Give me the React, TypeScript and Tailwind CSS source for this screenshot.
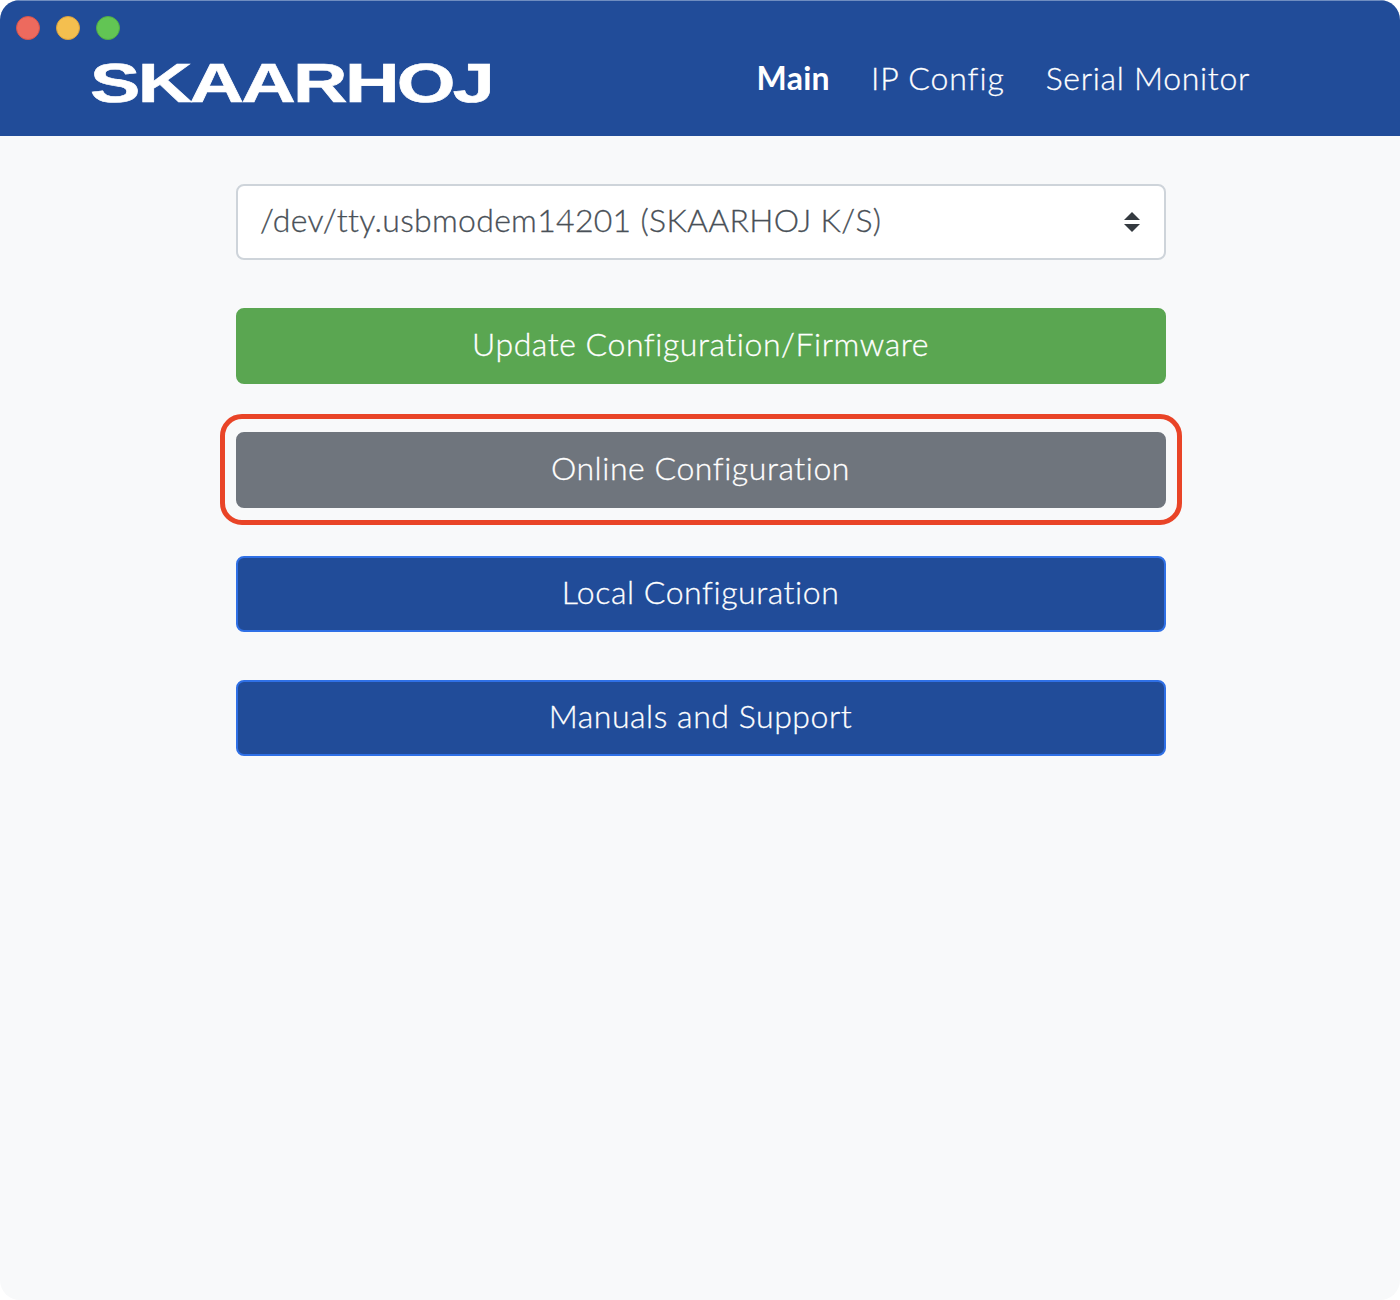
import React from "react";

const BUTTONS = [
  { label: "Update Configuration/Firmware", className: "bg-[#5aa651] border-[#5aa651]" },
  { label: "Online Configuration", className: "bg-[#6f757d] border-[#6f757d]", highlighted: true },
  { label: "Local Configuration", className: "bg-[#214c99] border-[#2f70e6]" },
  { label: "Manuals and Support", className: "bg-[#214c99] border-[#2f70e6]" },
];

const Logo = () => (
  <svg width="420" height="64" viewBox="0 0 420 64" className="block overflow-visible">
    <text
      x="-2"
      y="54.5"
      fontFamily="'Liberation Sans', Arial, sans-serif"
      fontWeight="700"
      fontSize="56"
      fill="#ffffff"
      stroke="#ffffff"
      strokeWidth="0.6"
      letterSpacing="-2"
      textLength="402"
      lengthAdjust="spacingAndGlyphs"
    >
      SKAARHOJ
    </text>
  </svg>
);

export default function App() {
  return (
    <div className="bg-white font-['Lato',sans-serif] [font-variant-ligatures:none]">
      <div className="relative flex h-[1300px] w-[1400px] flex-col overflow-hidden rounded-[20px] bg-[#f8f9fa]">
        <div className="absolute left-4 top-4 flex gap-4">
          <span className="h-6 w-6 rounded-full border border-[#d9544a] bg-[#ed6a5e]" />
          <span className="h-6 w-6 rounded-full border border-[#dba13c] bg-[#f4bf4f]" />
          <span className="h-6 w-6 rounded-full border border-[#52ad45] bg-[#62c554]" />
        </div>

        <header className="flex h-[136px] items-start justify-between border-t border-[#6f8dc0] bg-[#214c99] pl-[92px] pr-[150px]">
          <div className="mt-[46px]">
            <Logo />
          </div>
          <nav className="mt-[53px] flex gap-[41px] text-[32px] leading-[48px] text-white">
            <a className="font-bold tracking-[0.3px]">Main</a>
            <a className="font-light tracking-[0.9px] [-webkit-text-stroke:0.3px_#ffffff]">IP Config</a>
            <a className="font-light tracking-[0.7px] [-webkit-text-stroke:0.3px_#ffffff]">Serial Monitor</a>
          </nav>
        </header>

        <main className="ml-[236px] mt-12 flex w-[930px] flex-col gap-12">
          <div className="relative">
            <select className="block h-[76px] w-full appearance-none rounded-lg border-2 border-[#ced4da] bg-white pb-[4px] pl-[22px] text-[32px] font-light tracking-[0.3px] text-[#495057] [-webkit-text-stroke:0.3px_#495057]">
              <option>/dev/tty.usbmodem14201 (SKAARHOJ K/S)</option>
            </select>
            <svg width="16" height="20" viewBox="0 0 16 20" className="pointer-events-none absolute right-[26px] top-[28px]">
              <path d="M8 0L16 8H0Z M0 12H16L8 20Z" fill="#343a40" />
            </svg>
          </div>

          {BUTTONS.map((b) => (
            <div key={b.label} className="relative">
              <button className={`block h-[76px] w-full rounded-lg border-2 pb-[4px] pr-[1px] text-[32px] font-light tracking-[0.55px] text-white [-webkit-text-stroke:0.3px_#ffffff] ${b.className}`}>
                {b.label}
              </button>
              {b.highlighted && (
                <div className="pointer-events-none absolute -left-4 -right-4 -top-[18px] -bottom-[17px] rounded-[22px] border-[5px] border-[#e94427]" />
              )}
            </div>
          ))}
        </main>
      </div>
    </div>
  );
}
